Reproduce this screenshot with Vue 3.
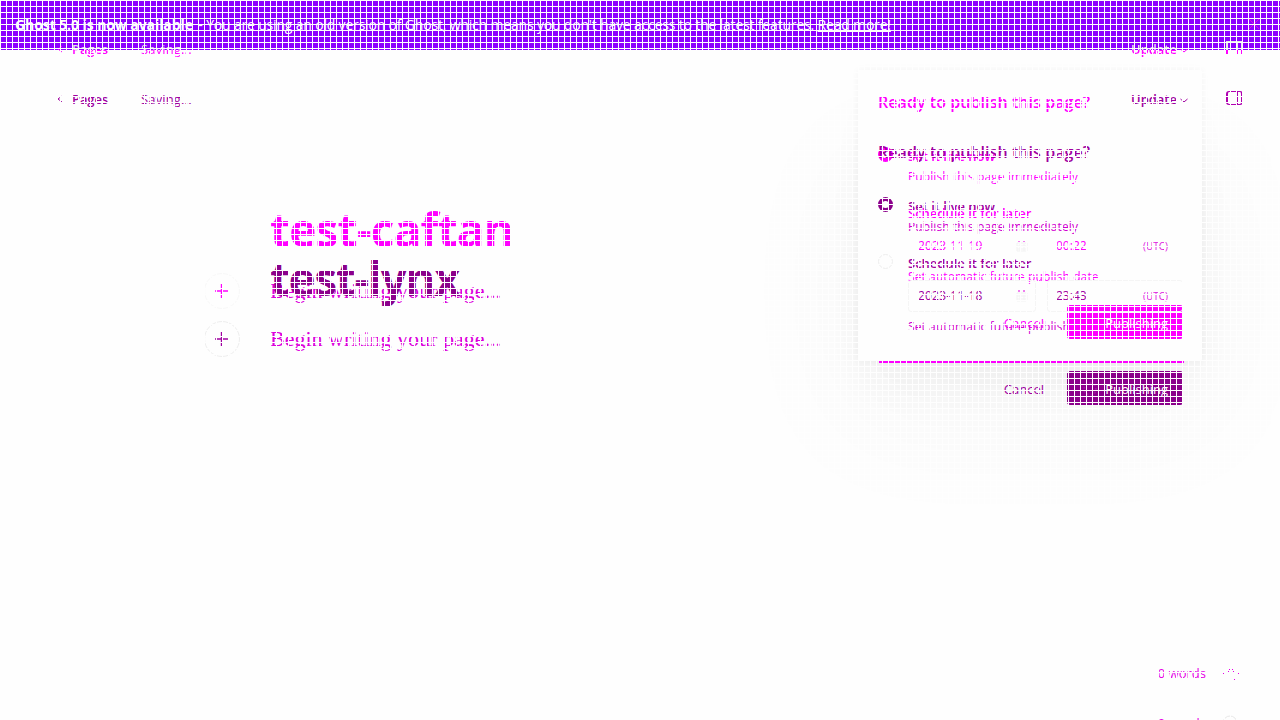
<script setup>
const revisions = [
  { id: 'before', title: 'test-caftan', date: '2023-11-19', time: '00:22' },
  { id: 'after', title: 'test-lynx', date: '2023-11-18', time: '23:43' },
]
</script>

<template>
  <div class="screen">
    <div class="shadow-field"></div>
    <div class="card"></div>
    <header class="banner">
      <p><b>Ghost 5.0 is now available</b> - You are using an old version of Ghost, which means you don't have access to the latest features. <u>Read more!</u></p>
      <svg width="12" height="12" viewBox="0 0 12 12"><path d="M1 1L11 11M11 1L1 11" /></svg>
    </header>

    <section v-for="r in revisions" :key="r.id" class="layer" :class="r.id">
      <nav class="toolbar">
        <svg class="back" width="6" height="8" viewBox="0 0 6 8"><path d="M5 1L1 4L5 7" /></svg>
        <span class="pages ink">Pages</span>
        <span class="saving ink">Saving...</span>
        <span class="update ink">Update</span>
        <svg class="chev" width="8" height="5" viewBox="0 0 8 5"><path d="M.5 1L4 4L7.5 1" /></svg>
        <span class="panel-icon"><i></i></span>
      </nav>
      <main>
        <h1>{{ r.title }}</h1>
        <div class="writer">
          <span class="plus"><svg width="14" height="14" viewBox="0 0 14 14"><path d="M6.5 0V14M0 7H14" /></svg></span>
          <p>Begin writing your page...</p>
        </div>
      </main>
      <aside class="popup">
        <h2>Ready to publish this page?</h2>
        <div class="option live"><i class="radio on"></i><span>Set it live now</span></div>
        <p class="help first">Publish this page immediately</p>
        <div class="option later"><i class="radio"></i><span>Schedule it for later</span></div>
        <div class="fields">
          <div class="field date"><span>{{ r.date }}</span>
            <svg width="12" height="14" viewBox="0 0 12 14"><path class="pins" d="M3 1V3M8 1V3" /><path class="cal" d="M1 4H11V12H1ZM1 7H11M1 10H11M4 5V12M8 5V12" /></svg>
          </div>
          <div class="field time"><span>{{ r.time }}</span><small>(UTC)</small></div>
        </div>
        <p class="help second">Set automatic future publish date</p>
        <div class="actions"><span class="cancel">Cancel</span><span class="publish"><i class="spinner"></i>Publishing</span></div>
      </aside>
    </section>

    <div class="divider"></div>
    <footer>
      <div class="words"><span>0 words</span>
        <svg width="18" height="18" viewBox="0 0 18 18"><path d="M8 1.5h1M1 9.5h1M16 9.5h1M8 16.5h1M12 15.5h1M7 5.5h1M10 5.5h1M6 7.5h1M11 7.5h1" /></svg>
      </div>
      <div class="words next"><span>0 words</span>
        <svg width="18" height="18" viewBox="0 0 18 18"><circle class="pale" cx="8" cy="9" r="7" /><path d="M8 2.5h1M7.5 6V8M10.5 6V8" /></svg>
      </div>
    </footer>
    <div class="mesh"></div>
  </div>
</template>

<style>
body { margin: 0; background: #fefefe; overflow: hidden; }
</style>

<style scoped>
* { box-sizing: border-box; }
.screen { position: relative; width: 1280px; height: 720px; overflow: hidden; background: #fefefe; font: 13px/20px "Open Sans", sans-serif; }
h1, h2, p { margin: 0; }
svg { fill: none; flex: none; }
.banner { position: relative; display: flex; align-items: center; height: 50px; padding: 0 20px 0 15px; background: #8c00ff; color: #fff; font-size: 14px; letter-spacing: -.18px; white-space: nowrap; }
.banner b { letter-spacing: -.08px; margin-right: 2px; }
.banner svg { margin-left: auto; margin-top: -3px; stroke: #d713dc; }
.shadow-field { position: absolute; left: 858px; top: 120px; width: 343px; height: 241px; box-shadow: 0 50px 130px 20px #00000008, 0 30px 50px #00000005; }
.card { position: absolute; left: 858px; top: 70px; width: 344px; height: 291px; border-radius: 2px; background: #fefefe; box-shadow: 0 0 8px #0000000b, 0 30px 50px -10px #00000007; }
.layer { position: absolute; inset: 0; color: #a000a0; }
.before { color: #f0f; }
.toolbar { display: flex; align-items: center; height: 20px; margin-top: 89px; padding: 0 37px 0 57px; }
.before .toolbar { margin-top: 39px; }
.before .ink { color: transparent; background: linear-gradient(#e7ebe5 11px, #f0f 11px); background-clip: text; }
.toolbar svg, .plus svg { stroke: currentColor; }
.plus svg { stroke-width: 1.4; }
.pages { width: 69px; margin-left: 9px; font-weight: 600; letter-spacing: -.1px; }
.saving { letter-spacing: .15px; }
.update { margin-left: auto; font-weight: 600; }
.chev { margin: 3px 38px 0 3px; }
.panel-icon { width: 17px; height: 14px; margin-top: -2px; padding-left: 9px; border: 1px solid #b000b0; border-width: 1px 2px; border-radius: 3px; }
.panel-icon i { display: block; width: 1px; height: 12px; background: #b000b0; }
.before .panel-icon { border-image: linear-gradient(#e7ebe5 65%, #f0f 65%) 1 2; }
.before .panel-icon i { background: linear-gradient(#e7ebe5 65%, #f0f 65%); }
main { padding: 146px 0 0 204px; }
.before main { padding-top: 147px; }
h1 { padding-left: 66px; height: 52px; font-size: 46px; line-height: 47px; font-weight: 700; letter-spacing: -1.4px; color: #8b008b; }
.before h1 { color: #f0f; line-height: 46px; letter-spacing: -.8px; }
.writer { display: flex; align-items: center; gap: 30px; height: 36px; margin-top: 14px; }
.before .writer { margin-top: 15px; }
.writer p { color: #dc00dc; font: 22px/30px "Liberation Serif", serif; white-space: nowrap; }
.plus { display: grid; place-items: center; width: 36px; height: 36px; border: 1px solid #eee; border-radius: 50%; }
.before .plus { border-color: #f8f8f8; }
.popup { position: absolute; left: 858px; top: 142px; width: 344px; height: 270px; padding: 0 19px 0 20px; white-space: nowrap; }
.before .popup { top: 92px; }
h2 { height: 55px; font-size: 16px; line-height: 20px; font-weight: 600; letter-spacing: .07px; }
.option { display: flex; height: 20px; gap: 15px; font-weight: 600; }
.option span { line-height: 18px; }
.radio { width: 15px; height: 15px; border: 1px solid #eee; border-radius: 50%; }
.radio.on { border: 4px solid #8b008b; background: #fefefe; }
.before .radio.on { border-color: #f0f; }
.before .radio:not(.on) { border-color: transparent; }
.help { height: 20px; padding-left: 30px; font-size: 12px; letter-spacing: .1px; color: #d100d1; }
.before .help { color: #f0f; }
.later { margin-top: 17px; }
.fields { display: flex; gap: 11px; margin: 6px 0 0 30px; }
.field { display: flex; align-items: center; justify-content: space-between; height: 32px; border: 1px solid #f5f5f5; border-radius: 3px; font-size: 12px; }
.before .field { border-color: transparent; }
.date { width: 128px; padding: 0 7px 0 9px; letter-spacing: .2px; }
.time { width: 136px; padding: 0 14px 0 8px; }
.field svg { stroke: #f2f2f2; }
.field .pins { stroke: #e000e0; }
small { font-size: 10px; color: #df20df; }
.second { width: 189px; margin-top: 5px; overflow: hidden; }
.before .second { width: 230px; }
.actions { display: flex; justify-content: flex-end; align-items: center; gap: 23px; margin-top: 34px; }
.cancel, .publish { line-height: 20px; padding-top: 2px; }
.before .actions { margin-top: 18px; }
.publish { display: flex; align-items: center; justify-content: flex-end; width: 116px; height: 34px; padding-right: 15px; border-radius: 3px; background: #8b008b; color: #fff; }
.before .publish { background: #f0f; }
.spinner { width: 14px; height: 14px; margin-right: 8px; border: 2px dotted #9c159c; border-radius: 50%; }
.before .spinner { border-color: transparent; }
.divider { position: absolute; left: 879px; top: 361px; width: 305px; height: 2px; background: #f0f; }
footer { position: absolute; right: 40px; top: 663px; color: #e600e6; }
.words { display: flex; align-items: center; gap: 16px; height: 20px; }
.words svg { stroke: #e600e6; }
.words .pale { stroke: #e8e8e8; }
.next { margin-top: 30px; }
.mesh { position: absolute; inset: 0; background: repeating-linear-gradient(90deg, #fefefe 0 1px, transparent 1px 6px), repeating-linear-gradient(#fefefe 0 1px, transparent 1px 6px); }
</style>
